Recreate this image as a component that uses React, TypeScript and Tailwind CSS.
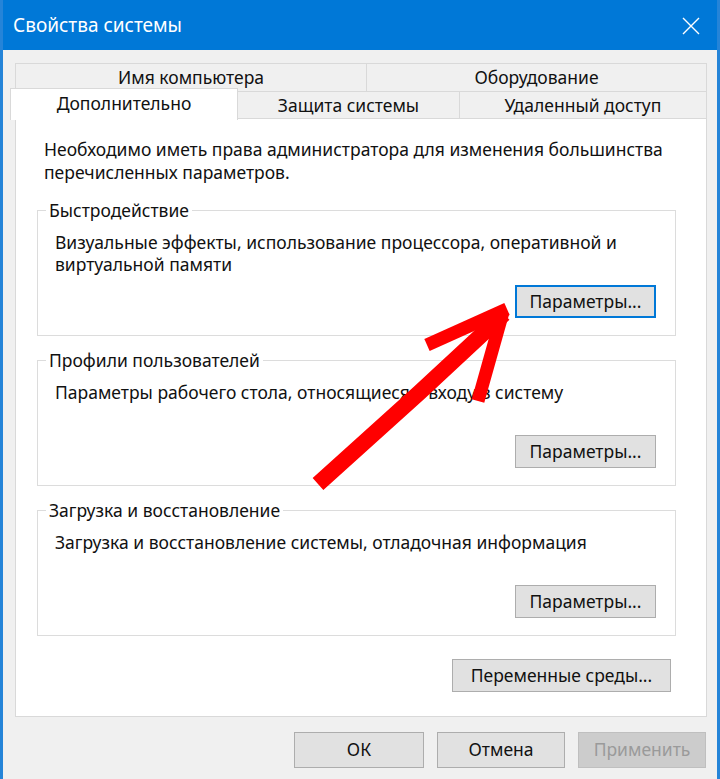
import clsx from "clsx";

type BtnProps = {
  label: string;
  className?: string;
  focused?: boolean;
  disabled?: boolean;
};

function Btn({ label, className, focused, disabled }: BtnProps) {
  return (
    <button
      className={clsx(
        "flex h-[33px] items-center justify-center text-[17.5px] leading-none",
        focused && "border-2 border-[#0078d7] bg-[#e1e1e1] text-[#111]",
        disabled && "border border-[#bfbfbf] bg-[#cccccc] text-[#9a9a9a]",
        !focused && !disabled && "border border-[#adadad] bg-[#e1e1e1] text-[#111]",
        className
      )}
    >
      {label}
    </button>
  );
}

function GroupBox({ title, text }: { title: string; text: string }) {
  return (
    <fieldset className="w-[639px] border border-[#dcdcdc]">
      <legend className="ml-[8px] px-[3px] text-[17.5px] leading-[22px]">{title}</legend>
      <div className="flex h-[114px] flex-col pt-[10px] pb-[17px] pl-[17px] pr-[19px]">
        <p className="text-[17.5px] leading-[22px]">{text}</p>
        <Btn label="Параметры..." className="mt-auto w-[141px] self-end" focused={title === "Быстродействие"} />
      </div>
    </fieldset>
  );
}

export default function App() {
  return (
    <div className="relative flex h-[779px] w-[720px] flex-col overflow-hidden border-x-[3px] border-[#2584d8] bg-[#f0f0f0] font-['Noto_Sans',sans-serif] text-[#111]">
      {/* заголовок окна */}
      <div className="-mx-[3px] flex h-[50px] shrink-0 items-center justify-between bg-[#0078d7] pl-[13px] pr-[20px] text-white">
        <span className="text-[19px]">Свойства системы</span>
        <svg width="18" height="18" viewBox="0 0 18 18" className="mt-[2px]">
          <path d="M1 1L17 17M17 1L1 17" stroke="white" strokeWidth="1.4" />
        </svg>
      </div>

      <div className="flex flex-1 flex-col pt-[13px] pl-[12px] pr-[10px]">
        {/* вкладки */}
        <div className="flex h-[28px] text-[17.5px]">
          <div className="flex w-[352px] items-center justify-center border-x border-t border-[#d9d9d9]">Имя компьютера</div>
          <div className="flex flex-1 items-center justify-center border-r border-t border-[#d9d9d9]">Оборудование</div>
        </div>
        <div className="flex h-[27px] border-t border-[#d9d9d9] text-[17.5px]">
          <div className="relative z-10 -mt-[4px] -ml-[5px] flex h-[32px] w-[228px] items-center justify-center border-x border-t border-[#d9d9d9] bg-white pb-[3px]">
            Дополнительно
          </div>
          <div className="flex w-[222px] items-center justify-center border-r border-[#d9d9d9]">Защита системы</div>
          <div className="flex flex-1 items-center justify-center border-r border-[#d9d9d9]">Удаленный доступ</div>
        </div>

        {/* панель */}
        <div className="flex h-[599px] flex-col border border-[#d9d9d9] bg-white pt-[19px] pl-[21px]">
          <p className="pl-[7px] text-[17.5px] leading-[23px]">
            Необходимо иметь права администратора для изменения большинства
            <br />
            перечисленных параметров.
          </p>
          <div className="mt-[15px] flex flex-col gap-[13px]">
            <GroupBox
              title="Быстродействие"
              text="Визуальные эффекты, использование процессора, оперативной и виртуальной памяти"
            />
            <GroupBox title="Профили пользователей" text="Параметры рабочего стола, относящиеся к входу в систему" />
            <GroupBox
              title="Загрузка и восстановление"
              text="Загрузка и восстановление системы, отладочная информация"
            />
          </div>
          <div className="mt-[23px] flex justify-end pr-[35px]">
            <Btn label="Переменные среды..." className="w-[219px]" />
          </div>
        </div>

        {/* кнопки диалога */}
        <div className="mt-[15px] flex justify-end gap-[13px] pr-[1px]">
          <Btn label="ОК" className="h-[36px] w-[130px]" />
          <Btn label="Отмена" className="h-[36px] w-[128px]" />
          <Btn label="Применить" className="h-[36px] w-[128px]" disabled />
        </div>
      </div>

      {/* красная стрелка поверх окна */}
      <svg className="pointer-events-none absolute -left-[3px] top-0" width="720" height="779" viewBox="0 0 720 779">
        <g stroke="#ff0000" fill="none" strokeLinejoin="round">
          <path d="M318 484 L 420 392 L 504 314" strokeWidth="16" />
          <path d="M427 345 L 507 309" strokeWidth="13" />
          <path d="M503 312 L 478 401" strokeWidth="13" />
        </g>
      </svg>
    </div>
  );
}
